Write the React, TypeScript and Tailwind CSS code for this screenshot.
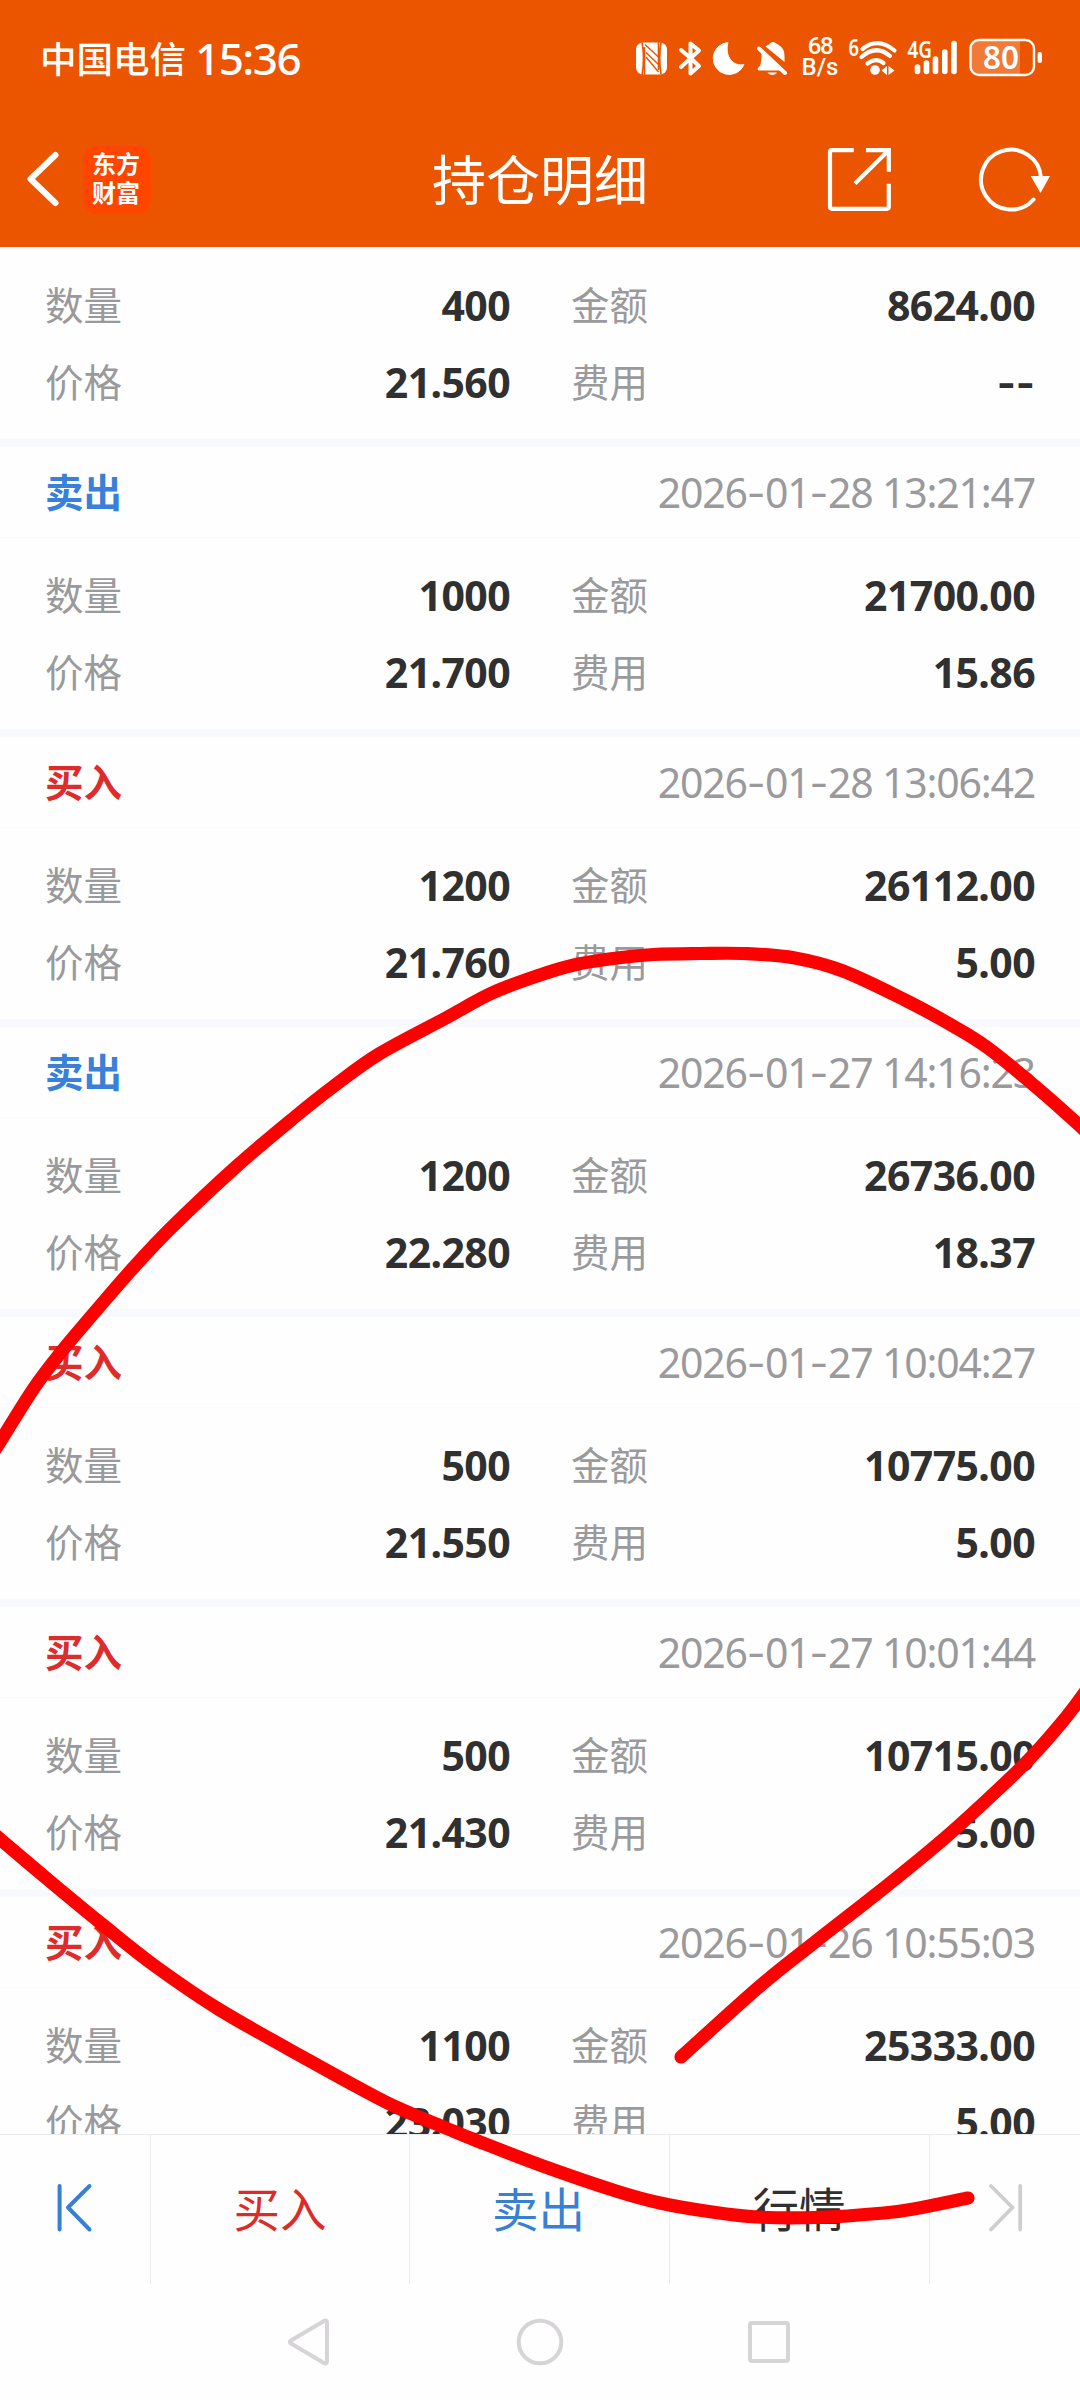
type Point = [number, number];

type Trade = {
  side?: 'buy' | 'sell';
  time?: string;
  qty: string;
  amount: string;
  price: string;
  fee: string;
};

const trades: Trade[] = [
  { qty: '400', amount: '8624.00', price: '21.560', fee: '--' },
  { side: 'sell', time: '2026-01-28 13:21:47', qty: '1000', amount: '21700.00', price: '21.700', fee: '15.86' },
  { side: 'buy', time: '2026-01-28 13:06:42', qty: '1200', amount: '26112.00', price: '21.760', fee: '5.00' },
  { side: 'sell', time: '2026-01-27 14:16:23', qty: '1200', amount: '26736.00', price: '22.280', fee: '18.37' },
  { side: 'buy', time: '2026-01-27 10:04:27', qty: '500', amount: '10775.00', price: '21.550', fee: '5.00' },
  { side: 'buy', time: '2026-01-27 10:01:44', qty: '500', amount: '10715.00', price: '21.430', fee: '5.00' },
  { side: 'buy', time: '2026-01-26 10:55:03', qty: '1100', amount: '25333.00', price: '23.030', fee: '5.00' },
];

// Freehand marker strokes drawn over the page.
const strokes: Point[][] = [
  [
    [-14, 1464], [0, 1442], [34, 1388], [62, 1351], [100, 1306], [134, 1267], [172, 1227], [238, 1165], [296, 1116],
    [334, 1086], [379, 1054], [444, 1019], [492, 993], [540, 975], [574, 965], [609, 959], [654, 954.5], [700, 953.5],
    [747, 953.6], [795, 958], [843, 971], [905, 1000], [953, 1026], [988, 1048], [1036, 1087], [1080, 1126], [1096, 1142],
  ],
  [
    [1092, 1682], [1080, 1699], [1063, 1721], [1036, 1752], [1005, 1783], [946, 1837], [884, 1888], [815, 1942],
    [760, 1986], [681, 2057],
  ],
  [
    [-12, 1829], [0, 1839], [52, 1883], [103, 1925], [155, 1966], [220, 2010], [310, 2061], [361, 2089], [396, 2107],
    [448, 2129], [475, 2140], [540, 2165], [616, 2191], [660, 2203], [712, 2212], [757, 2217], [815, 2217.5],
    [884, 2213], [919, 2208], [968, 2198],
  ],
];

// Catmull-Rom spline through the given points, as cubic segments.
function smooth(p: Point[]): string {
  let d = `M${p[0][0]} ${p[0][1]}`;
  for (let i = 0; i < p.length - 1; i++) {
    const a = p[i - 1] ?? p[i];
    const b = p[i];
    const c = p[i + 1];
    const e = p[i + 2] ?? c;
    d += ` C${b[0] + (c[0] - a[0]) / 6} ${b[1] + (c[1] - a[1]) / 6} ${c[0] - (e[0] - b[0]) / 6} ${c[1] - (e[1] - b[1]) / 6} ${c[0]} ${c[1]}`;
  }
  return d;
}

function StatusBar() {
  return (
    <div className="flex h-[112px] items-start justify-between pl-[40px] pr-[36px] pt-[38px] text-white">
      <div className="flex h-10 items-center">
        <span className="text-[36.5px] font-medium leading-10">中国电信</span>
        <span className="ml-[9px] font-['Noto_Sans'] text-[44px] font-medium leading-10 tracking-[-1.500px]">15:36</span>
      </div>
      <div className="flex h-10 items-center">
        <svg className="h-10 w-[152px]" viewBox="635 38 152 40" fill="none">
          <rect x="636" y="42.5" width="31" height="32" rx="7" fill="#fff" />
          <path d="M642 42.500Q645 58 642 75M644.500 75V47M661 74.500Q658.500 58 661 42M658.500 42V70" stroke="#eb5500" strokeWidth="1.600" />
          <path d="M645 44.500L658.500 57M646 52.500L658.500 64.500M646 57L658.500 72" stroke="#eb5500" strokeWidth="1.400" />
          <path d="M681 50L690.500 58L699 66L690.500 73.500V63M681 67L699 50.500L690.500 43.500V56" stroke="#fff" strokeWidth="4" strokeLinejoin="round" strokeLinecap="round" />
          <path d="M728 42.500A16 16 0 1 0 744 64.500C734 67 724 57 728 42.500Z" fill="#fff" stroke="#fff" strokeLinejoin="round" />
          <path d="M761.500 52L780 70.500H759.500C757.500 70.500 757 68.500 758.500 67.500C761 65 761.500 62 761.500 52ZM765.500 46.500C768 45 769 44.500 770 43.500C771.500 41.500 774.500 41.500 776 43.500C782 46 784.500 50 784.500 56L784.500 62ZM767.500 72.500H777C775.500 75.800 769 75.800 767.500 72.500Z" fill="#fff" />
          <path d="M759 48.500L785 73" stroke="#fff" strokeWidth="4" strokeLinecap="round" />
        </svg>
        <div className="mb-[2px] ml-[15px] flex w-[36px] flex-col items-center font-['Roboto'] text-[24px] font-medium leading-[21.500px]">
          <span className="tracking-[-1.500px]">68</span>
          <span>B/s</span>
        </div>
        <svg className="ml-[8px] h-10 w-[198px] overflow-visible" viewBox="846 38 198 40" fill="none">
          <text x="848.500" y="55.500" fill="#fff" fontFamily="Noto Sans" fontWeight="600" fontSize="23" textLength="10.500" lengthAdjust="spacingAndGlyphs">6</text>
          <g stroke="#fff" strokeWidth="4.200" strokeLinecap="round">
            <path d="M862.500 49Q878 36.500 894.500 50.500" />
            <path d="M861.500 57Q876 44 890 56" />
            <path d="M867.500 63.500Q876 57 883.500 63" />
          </g>
          <circle cx="875" cy="70" r="4.800" fill="#fff" />
          <path d="M881.500 70.500L887 66V75ZM888.500 66L894.500 70.500L888.500 75Z" fill="#fff" />
          <text x="907.500" y="58" fill="#fff" fontFamily="Noto Sans" fontWeight="600" fontSize="24" textLength="24.500" lengthAdjust="spacingAndGlyphs">4G</text>
          <g stroke="#fff" strokeWidth="5.600" strokeLinecap="round">
            <path d="M917.500 67V71.500" />
            <path d="M926.500 63V71.500" />
            <path d="M935.500 59V71.500" />
            <path d="M944.800 52V71.500" />
            <path d="M954 43.500V71.500" />
          </g>
          <path d="M979 41H1020V74H979Q971 74 971 66V49Q971 41 979 41Z" fill="#fff" fillOpacity=".22" />
          <rect x="970.500" y="40" width="63.500" height="35" rx="8.500" stroke="#fff" strokeWidth="2.400" />
          <rect x="1037.600" y="52" width="4.400" height="11" rx="2" fill="#fff" />
          <text x="983" y="69" fill="#fff" fontFamily="Noto Sans" fontWeight="600" fontSize="32" textLength="36" lengthAdjust="spacingAndGlyphs">80</text>
        </svg>
      </div>
    </div>
  );
}

function TitleBar() {
  return (
    <div className="grid h-[135px] grid-cols-[1fr_auto_1fr] items-center text-white">
      <div className="flex items-center pl-6">
        <svg className="mb-px h-[60px] w-10" viewBox="0 0 40 60" fill="none">
          <path d="M31.500 6L6.500 30L31.500 54" stroke="#fff" strokeWidth="6" strokeLinecap="round" strokeLinejoin="round" />
        </svg>
        <div className="ml-[19px] flex h-[68px] w-[68px] flex-col items-center justify-center rounded-[14px] bg-[#ff4500] pb-[4px] pr-[2px] text-[24px] font-bold leading-[28.500px]">
          <span>东方</span>
          <span>财富</span>
        </div>
      </div>
      <h1 className="mb-[3px] text-[54px] font-normal leading-[60px]">持仓明细</h1>
      <div className="flex items-center justify-end pb-px pr-[28px]">
        <svg className="h-[68px] w-[68px]" viewBox="825 145 68 68" fill="none" stroke="#fff" strokeWidth="4.200">
          <path d="M853.700 150.200H832Q830 150.200 830 152.200V206.800Q830 208.800 832 208.800H886.800Q888.800 208.800 888.800 206.800V183.700" />
          <path d="M866 150.200H888.800V171.700" />
          <path d="M855 183.500L888 151" />
        </svg>
        <svg className="ml-[82px] h-[68px] w-[77px]" viewBox="975 145 77 68" fill="none">
          <path d="M1033.500 199.500A30 30 0 1 1 1041 178" stroke="#fff" strokeWidth="4" strokeLinecap="round" />
          <path d="M1030.700 176H1050L1040.500 193Z" fill="#fff" />
        </svg>
      </div>
    </div>
  );
}

function Field({ label, value }: { label: string; value: string }) {
  return (
    <div className="flex h-[77px] items-center justify-between">
      <span className="mb-[5px] text-[38.500px] leading-[50px] text-[#9a999b]">{label}</span>
      {value === '--' ? (
        <span className="font-['Inter'] text-[41px] font-bold leading-[50px] text-[#303030]">{value}</span>
      ) : (
        <span className="mb-[1px] font-['Noto_Sans'] text-[41px] font-bold leading-[50px] tracking-[-0.600px] text-[#303030]">{value}</span>
      )}
    </div>
  );
}

function Timestamp({ value }: { value: string }) {
  return (
    <time className="whitespace-pre font-['Noto_Sans'] text-[41px] leading-[50px] tracking-[-1.200px] text-[#9a999b]">
      {value.split(/(-)/).map((part, i) =>
        part === '-' ? (
          <span key={i} className="font-['Inter'] leading-[40px] tracking-[-0.500px]">-</span>
        ) : (
          part
        ),
      )}
    </time>
  );
}

function TradeCard({ t }: { t: Trade }) {
  return (
    <section className="shrink-0">
      {t.side ? (
        <>
          <div className="h-2 bg-[#f8f9fe]" />
          <header className="flex h-[90px] items-center justify-between pl-[45px] pr-[45px]">
            <span className={t.side === 'buy' ? 'mb-[4px] text-[38.500px] font-bold leading-[50px] text-[#de2b2b]' : 'mb-[4px] text-[38.500px] font-bold leading-[50px] text-[#3880da]'}>
              {t.side === 'buy' ? '买入' : '卖出'}
            </span>
            <Timestamp value={t.time ?? ''} />
          </header>
        </>
      ) : null}
      <div className="grid grid-cols-[465px_464px] gap-x-[61px] border-t border-[#fbfbfb] pb-[18px] pl-[45px] pt-[19px]">
        <Field label="数量" value={t.qty} />
        <Field label="金额" value={t.amount} />
        <Field label="价格" value={t.price} />
        <Field label="费用" value={t.fee} />
      </div>
    </section>
  );
}

function ActionBar() {
  return (
    <footer className="flex h-[150px] shrink-0 border-t border-[#ebebeb] text-[46.500px]">
      <div className="flex w-[151px] justify-center border-r border-[#ededed] pt-[47px]">
        <svg className="h-[52px] w-10" viewBox="56 2182 40 52" fill="none" stroke="#3880d2" strokeWidth="4" strokeLinecap="round" strokeLinejoin="round">
          <path d="M60.600 2186V2229.500M90.500 2186L69 2207.500L90.500 2229.500" />
        </svg>
      </div>
      <div className="w-[259px] border-r border-[#ededed] pt-[38px] text-center leading-[68px] text-[#dc2b2b]">买入</div>
      <div className="w-[260px] border-r border-[#ededed] pr-[2px] pt-[38px] text-center leading-[68px] text-[#3880d2]">卖出</div>
      <div className="w-[260px] border-r border-[#ededed] pr-[1px] pt-[38px] text-center leading-[68px] text-[#303030]">行情</div>
      <div className="flex flex-1 justify-center pt-[47px]">
        <svg className="h-[52px] w-10" viewBox="985 2182 40 52" fill="none" stroke="#cecece" strokeWidth="3.800" strokeLinecap="round" strokeLinejoin="round">
          <path d="M1020.200 2186V2229.500M991 2186L1012.500 2207.500L991 2229.500" />
        </svg>
      </div>
    </footer>
  );
}

function SystemNav() {
  return (
    <nav className="flex flex-1 items-start justify-center gap-[181px] pt-[33px]">
      <svg className="h-[50px] w-[50px]" viewBox="284 2317 50 50" fill="none" stroke="#d6d4d6" strokeWidth="4" strokeLinejoin="round">
        <path d="M324 2321Q327 2319.500 327 2323V2361Q327 2364.500 324 2363L291 2343.500Q288.800 2342 291 2340.500Z" />
      </svg>
      <svg className="h-[50px] w-[50px]" viewBox="515 2317 50 50" fill="none" stroke="#d6d4d6" strokeWidth="4">
        <circle cx="540" cy="2342" r="21.300" />
      </svg>
      <svg className="h-[50px] w-[50px]" viewBox="746 2317 50 50" fill="none" stroke="#d6d4d6" strokeWidth="4">
        <rect x="750" y="2323" width="38" height="38" rx="2" />
      </svg>
    </nav>
  );
}

export default function App() {
  return (
    <div className="relative flex h-[2400px] w-[1080px] flex-col overflow-hidden bg-[#fefefe] font-['Noto_Sans_CJK_SC',sans-serif]">
      <div className="h-[247px] shrink-0 bg-[#ec5500]">
        <StatusBar />
        <TitleBar />
      </div>
      <main className="flex h-[1887px] shrink-0 flex-col overflow-hidden">
        {trades.map((t, i) => (
          <TradeCard key={i} t={t} />
        ))}
      </main>
      <ActionBar />
      <SystemNav />
      <svg className="pointer-events-none absolute inset-0 h-[2400px] w-[1080px]" viewBox="0 0 1080 2400" fill="none" stroke="#fe0000" strokeWidth="13.200" strokeLinecap="round" strokeLinejoin="round">
        {strokes.map((s, i) => (
          <path key={i} d={smooth(s)} />
        ))}
      </svg>
    </div>
  );
}
